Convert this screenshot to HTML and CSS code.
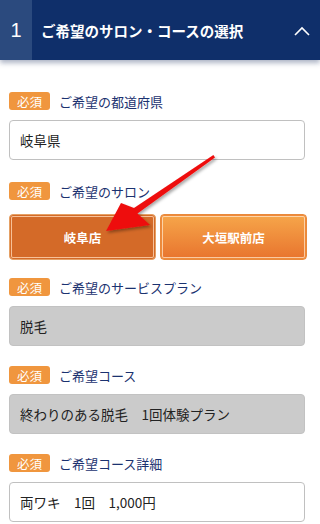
FILE: index.html
```html
<!DOCTYPE html>
<html>
<head>
	<title>サロン・コースの選択</title>
	<meta charset="utf-8">
	<meta name="viewport" content="width=device-width, initial-scale=1.0">
	<link rel="stylesheet" href="styles.css">
</head>
<body>
	<div class="step-head">
		<div class="step-num">1</div>
		<div class="step-title">ご希望のサロン・コースの選択</div>
		<svg class="chevron" width="16" height="10" viewBox="0 0 16 10">
			<polyline points="1,9 8,2 15,9" fill="none" stroke="#fff" stroke-width="1.6"/>
		</svg>
	</div>

	<div class="form">
		<div class="field first">
			<div class="label"><span class="req">必須</span>ご希望の都道府県</div>
			<div class="box">岐阜県</div>
		</div>

		<div class="field salon">
			<div class="label"><span class="req">必須</span>ご希望のサロン</div>
			<div class="btnrow">
				<button class="shop-btn active">岐阜店</button>
				<button class="shop-btn">大垣駅前店</button>
			</div>
		</div>

		<div class="field">
			<div class="label"><span class="req">必須</span>ご希望のサービスプラン</div>
			<div class="box grey">脱毛</div>
		</div>

		<div class="field">
			<div class="label"><span class="req">必須</span>ご希望コース</div>
			<div class="box grey">終わりのある脱毛　1回体験プラン</div>
		</div>

		<div class="field">
			<div class="label"><span class="req">必須</span>ご希望コース詳細</div>
			<div class="box">両ワキ　1回　1,000円</div>
		</div>
	</div>

	<svg class="arrow" width="320" height="524" viewBox="0 0 320 524">
		<defs>
			<filter id="shadow" x="-20%" y="-20%" width="140%" height="140%">
				<feDropShadow dx="1.5" dy="2" stdDeviation="1.5" flood-color="#000" flood-opacity="0.35"/>
			</filter>
		</defs>
		<polygon filter="url(#shadow)" fill="#ee1010"
			points="213.4,155 134,208 121,203 106,231 150,225 137.5,213.5 215,157.5"/>
	</svg>
</body>
</html>
```

FILE: styles.css
```css
*{
	padding: 0;
	margin: 0;
	box-sizing: border-box;
}
body{
	font-family: "Noto Sans CJK JP", "Noto Sans", sans-serif;
	background-color: #fff;
	width: 320px;
	height: 524px;
	overflow: hidden;
	position: relative;
}
.step-head{
	height: 60px;
	display: flex;
	align-items: center;
	background-color: #0f2f6a;
	color: white;
	box-shadow: 0 3px 5px rgba(20, 40, 90, .35);
}
.step-num{
	width: 32px;
	height: 100%;
	background-color: #2b4a7e;
	display: flex;
	align-items: center;
	justify-content: center;
	font-family: "Liberation Sans", sans-serif;
	font-size: 20px;
}
.step-title{
	flex: 1;
	padding-left: 9px;
	font-size: 14.5px;
	font-weight: bold;
}
.chevron{
	margin-right: 10px;
	margin-top: 1px;
}
.form{
	padding: 32px 15px 0 9px;
}
.field{
	margin-bottom: 20px;
}
.field.first{
	margin-bottom: 22px;
}
.label{
	display: flex;
	align-items: center;
	height: 18px;
	font-size: 13px;
	color: #1b3270;
	margin-bottom: 10px;
}
.req{
	display: inline-flex;
	align-items: center;
	justify-content: center;
	width: 41px;
	height: 18px;
	background-color: #f0963e;
	color: white;
	font-size: 12.5px;
	border-radius: 3px;
	margin-right: 9px;
}
.box{
	height: 40px;
	border: 1px solid #c0c0c0;
	border-radius: 4px;
	display: flex;
	align-items: center;
	padding-left: 10px;
	font-size: 13.5px;
	color: #222;
}
.grey{
	background-color: #cbcbcb;
	border-color: #c2c2c2;
}
.salon{
	margin-bottom: 18px;
}
.salon .label{
	margin-bottom: 14px;
}
.btnrow{
	display: flex;
	gap: 4px;
	margin-right: -2px;
}
.shop-btn{
	flex: 1;
	height: 46px;
	border: 1px solid #e88a3c;
	border-radius: 4px;
	background: linear-gradient(#f6a64a, #e8742e);
	box-shadow: inset 0 0 0 1px #f08a3a, inset 0 0 0 2px rgba(255, 230, 200, .75);
	color: white;
	font-family: "Noto Sans CJK JP", sans-serif;
	font-weight: bold;
	font-size: 12.5px;
}
.shop-btn.active{
	background: #d46a28;
	border-color: #e5a064;
	box-shadow: inset 0 0 0 1px #d46a28, inset 0 0 0 2px rgba(255, 215, 180, .8);
}
.arrow{
	position: absolute;
	top: 0;
	left: 0;
	pointer-events: none;
}
```
